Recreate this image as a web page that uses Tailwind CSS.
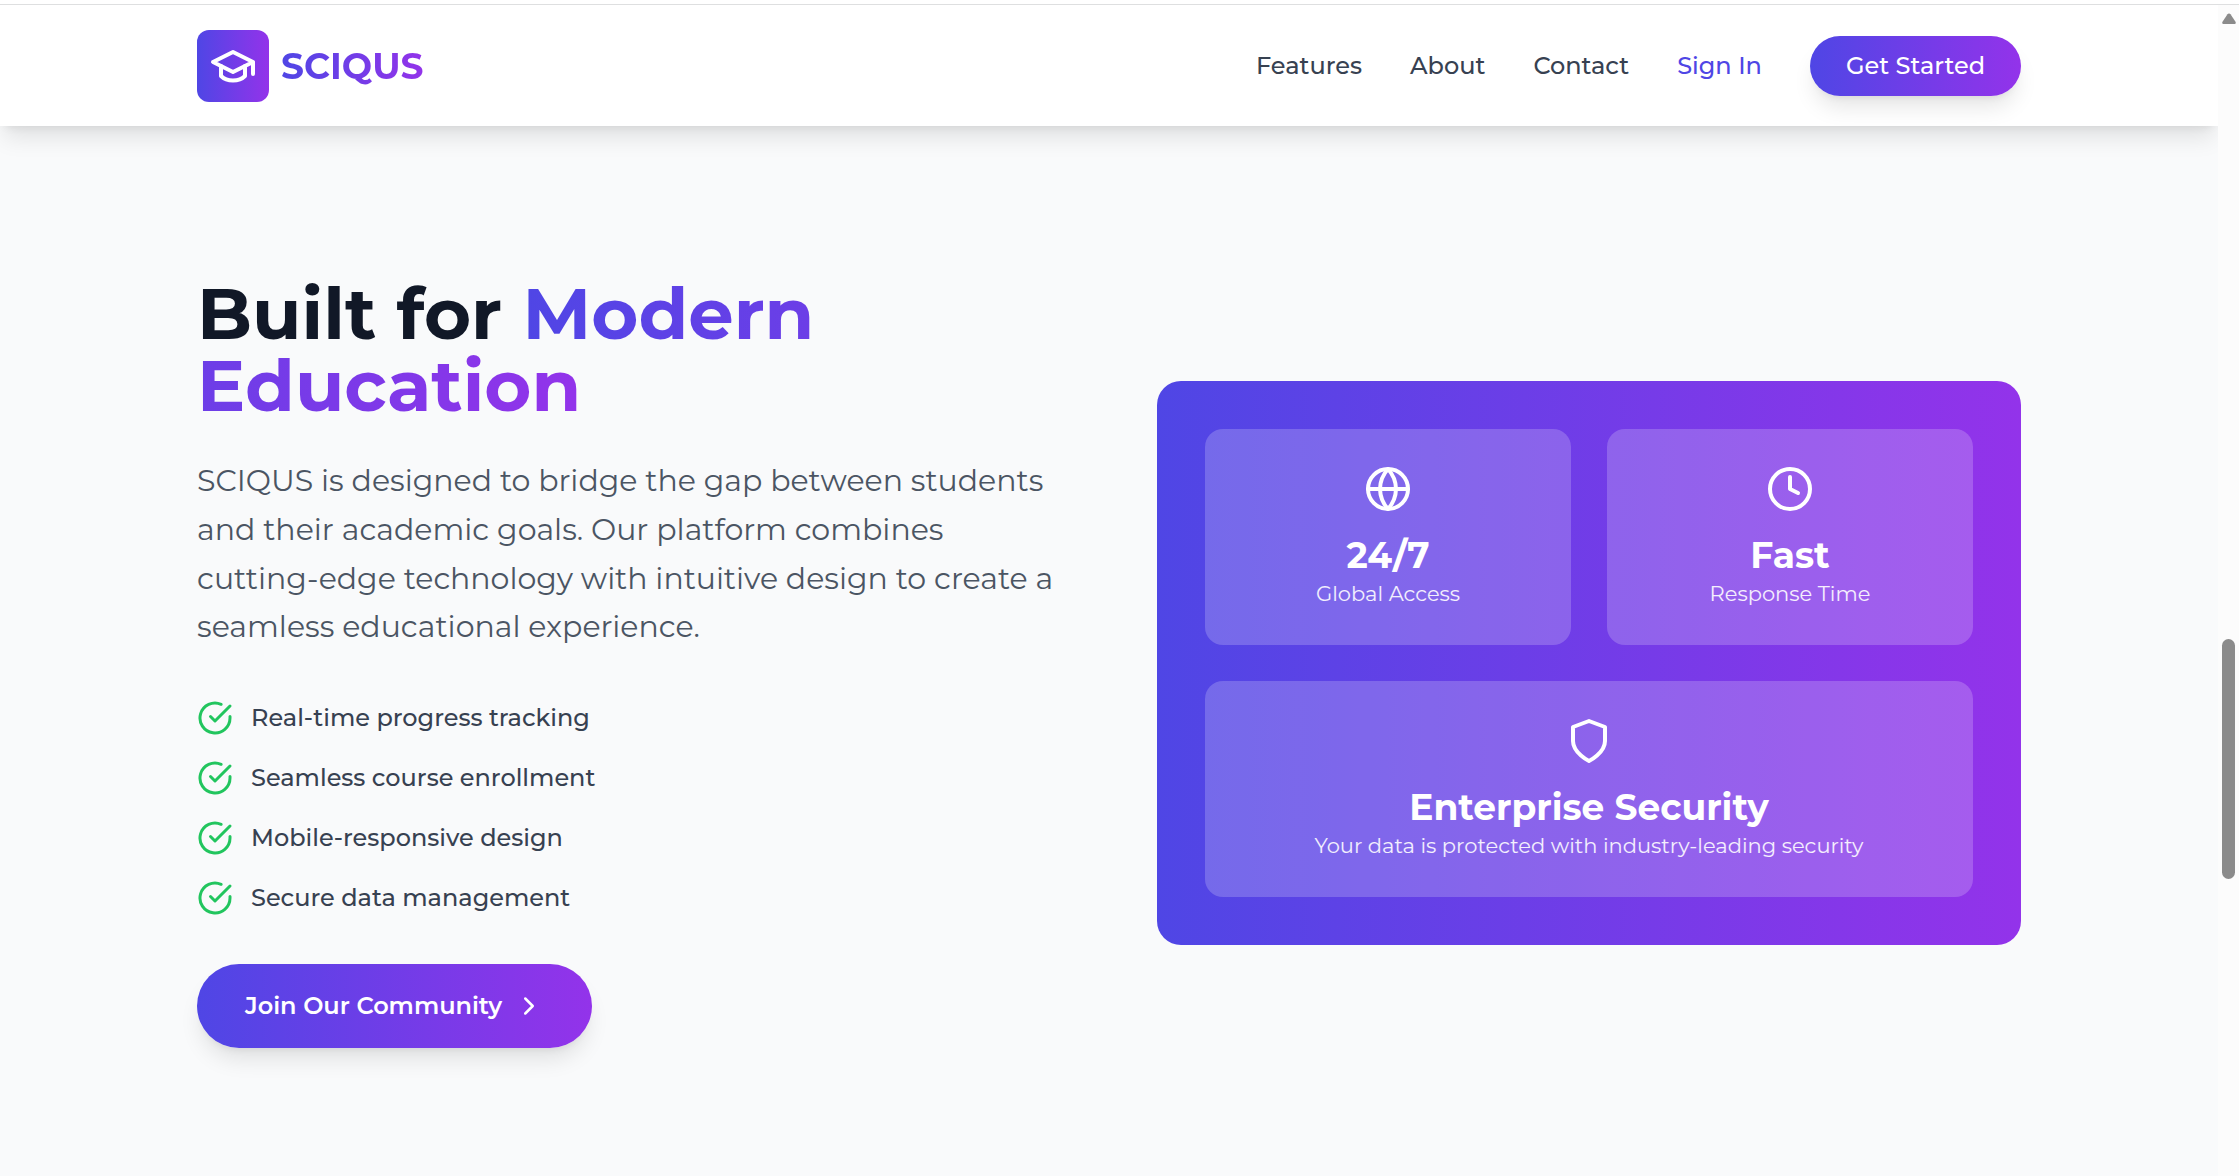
<!DOCTYPE html>
<html lang="en">
<head>
<meta charset="utf-8">
<meta name="viewport" content="width=device-width, initial-scale=1">
<title>SCIQUS</title>
<script src="https://cdn.jsdelivr.net/npm/@tailwindcss/browser@4"></script>
</head>
<body class="flex min-h-screen flex-col overflow-hidden bg-white font-['Montserrat','Inter',sans-serif]">
<div class="h-[5px] shrink-0 border-b border-[#dedfe0]"></div>
<div class="flex flex-1">
  <div class="flex min-w-0 flex-1 flex-col overflow-hidden bg-[#f9fafb]">
    <header class="z-10 bg-white shadow-[0_15px_22px_-4px_rgba(0,0,0,0.1),0_6px_9px_-6px_rgba(0,0,0,0.1)]">
      <div class="mx-auto flex h-[121px] max-w-[1920px] items-center justify-between px-12">
        <a href="#" class="flex items-center gap-3">
          <span class="flex size-18 items-center justify-center rounded-xl bg-linear-to-r/srgb from-[#4f46e5] to-[#9333ea]">
            <svg class="size-12 text-white" viewBox="0 0 24 24" fill="none" stroke="currentColor" stroke-width="2" stroke-linecap="round" stroke-linejoin="round" aria-hidden="true"><path d="M22 10v6M2 10l10-5 10 5-10 5z"/><path d="M6 12v5c3 3 9 3 12 0v-5"/></svg>
          </span>
          <span class="bg-linear-to-r/srgb from-[#4f46e5] to-[#9333ea] bg-clip-text text-4xl font-bold text-transparent">SCIQUS</span>
        </a>
        <nav class="flex items-center gap-12 text-2xl font-medium text-[#374151]">
          <a href="#">Features</a>
          <a href="#">About</a>
          <a href="#">Contact</a>
          <a href="#" class="text-[#4f46e5]">Sign In</a>
          <button class="h-15 rounded-full bg-linear-to-r/srgb from-[#4f46e5] to-[#9333ea] px-9 font-medium text-white shadow-[0_15px_22px_-4px_rgba(0,0,0,0.1),0_6px_9px_-6px_rgba(0,0,0,0.1)]">Get Started</button>
        </nav>
      </div>
    </header>
    <main class="flex-1 pt-[151px] pb-32">
      <section class="mx-auto grid max-w-[1920px] grid-cols-2 items-center gap-24 px-12">
        <div>
          <h2 class="mb-9 text-7xl leading-[72px] font-bold text-[#111827]">Built for <span class="bg-linear-to-r/srgb from-[#4f46e5] to-[#9333ea] bg-clip-text text-transparent">Modern Education</span></h2>
          <p class="mb-12 text-3xl leading-relaxed font-normal text-[#4b5563]">SCIQUS is designed to bridge the gap between students and their academic goals. Our platform combines cutting-edge technology with intuitive design to create a seamless educational experience.</p>
          <ul class="mb-12 flex flex-col gap-6 text-2xl leading-9 font-medium text-[#374151]">
            <li class="flex items-center gap-[18px]"><svg class="size-9 shrink-0 text-[#22c55e]" viewBox="0 0 24 24" fill="none" stroke="currentColor" stroke-width="2" stroke-linecap="round" stroke-linejoin="round" aria-hidden="true"><path d="M22 11.08V12a10 10 0 1 1-5.93-9.14"/><path d="m9 11 3 3L22 4"/></svg>Real-time progress tracking</li>
            <li class="flex items-center gap-[18px]"><svg class="size-9 shrink-0 text-[#22c55e]" viewBox="0 0 24 24" fill="none" stroke="currentColor" stroke-width="2" stroke-linecap="round" stroke-linejoin="round" aria-hidden="true"><path d="M22 11.08V12a10 10 0 1 1-5.93-9.14"/><path d="m9 11 3 3L22 4"/></svg>Seamless course enrollment</li>
            <li class="flex items-center gap-[18px]"><svg class="size-9 shrink-0 text-[#22c55e]" viewBox="0 0 24 24" fill="none" stroke="currentColor" stroke-width="2" stroke-linecap="round" stroke-linejoin="round" aria-hidden="true"><path d="M22 11.08V12a10 10 0 1 1-5.93-9.14"/><path d="m9 11 3 3L22 4"/></svg>Mobile-responsive design</li>
            <li class="flex items-center gap-[18px]"><svg class="size-9 shrink-0 text-[#22c55e]" viewBox="0 0 24 24" fill="none" stroke="currentColor" stroke-width="2" stroke-linecap="round" stroke-linejoin="round" aria-hidden="true"><path d="M22 11.08V12a10 10 0 1 1-5.93-9.14"/><path d="m9 11 3 3L22 4"/></svg>Secure data management</li>
          </ul>
          <button class="flex h-21 items-center gap-3 rounded-full bg-linear-to-r/srgb from-[#4f46e5] to-[#9333ea] px-12 text-2xl font-semibold text-white shadow-[0_15px_22px_-4px_rgba(0,0,0,0.1),0_6px_9px_-6px_rgba(0,0,0,0.1)]">Join Our Community
            <svg class="size-[30px]" viewBox="0 0 24 24" fill="none" stroke="currentColor" stroke-width="2" stroke-linecap="round" stroke-linejoin="round" aria-hidden="true"><path d="m9 18 6-6-6-6"/></svg>
          </button>
        </div>
        <div class="grid grid-cols-2 gap-9 rounded-3xl bg-linear-to-r/srgb from-[#4f46e5] to-[#9333ea] p-12 text-center text-white">
          <div class="flex flex-col items-center rounded-[18px] bg-white/20 p-9">
            <svg class="mb-[18px] size-12" viewBox="0 0 24 24" fill="none" stroke="currentColor" stroke-width="2" stroke-linecap="round" stroke-linejoin="round" aria-hidden="true"><circle cx="12" cy="12" r="10"/><path d="M2 12h20M12 2a15.3 15.3 0 0 1 4 10 15.3 15.3 0 0 1-4 10 15.3 15.3 0 0 1-4-10 15.3 15.3 0 0 1 4-10z"/></svg>
            <h3 class="text-4xl leading-12 font-bold">24/7</h3>
            <p class="text-[21px] leading-[30px] text-white/90">Global Access</p>
          </div>
          <div class="flex flex-col items-center rounded-[18px] bg-white/20 p-9">
            <svg class="mb-[18px] size-12" viewBox="0 0 24 24" fill="none" stroke="currentColor" stroke-width="2" stroke-linecap="round" stroke-linejoin="round" aria-hidden="true"><circle cx="12" cy="12" r="10"/><path d="M12 6v6l4 2"/></svg>
            <h3 class="text-4xl leading-12 font-bold">Fast</h3>
            <p class="text-[21px] leading-[30px] text-white/90">Response Time</p>
          </div>
          <div class="col-span-2 flex flex-col items-center rounded-[18px] bg-white/20 p-9">
            <svg class="mb-[18px] size-12" viewBox="0 0 24 24" fill="none" stroke="currentColor" stroke-width="2" stroke-linecap="round" stroke-linejoin="round" aria-hidden="true"><path d="M12 22s8-4 8-10V5l-8-3-8 3v7c0 6 8 10 8 10z"/></svg>
            <h3 class="text-4xl leading-12 font-bold">Enterprise Security</h3>
            <p class="text-[21px] leading-[30px] text-white/90">Your data is protected with industry-leading security</p>
          </div>
        </div>
      </section>
    </main>
  </div>
  <div class="flex w-[21px] shrink-0 flex-col items-center bg-[#fcfcfc] pt-2" aria-hidden="true">
    <svg class="h-3 w-4" viewBox="0 0 16 12" fill="#8b8b8b"><path d="M6.500 1.200a1.800 1.800 0 0 1 3 0l5 7.600c.7 1.100 0 2.200-1.200 2.200H2.700C1.500 11 .8 9.900 1.500 8.800z"/></svg>
    <div class="mt-[614px] h-60 w-[13px] rounded-full bg-[#8b8b8b]"></div>
  </div>
</div>
</body>
</html>
